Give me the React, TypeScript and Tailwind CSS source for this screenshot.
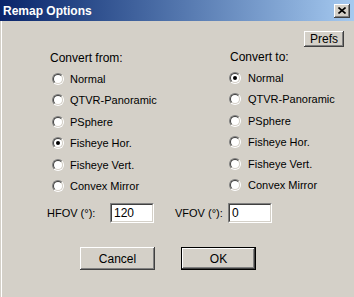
const FROM = ["Normal", "QTVR-Panoramic", "PSphere", "Fisheye Hor.", "Fisheye Vert.", "Convex Mirror"];
const TO = FROM;

function Radio({ checked }: { checked: boolean }) {
  return (
    <span className="flex h-[12px] w-[12px] shrink-0 rounded-full border border-t-[#808080] border-l-[#808080] border-r-white border-b-white">
      <span className="flex flex-1 items-center justify-center rounded-full border border-t-[#404040] border-l-[#404040] border-r-[#d4d0c8] border-b-[#d4d0c8] bg-white">
        {checked && <span className="h-[4px] w-[4px] rounded-full bg-black" />}
      </span>
    </span>
  );
}

function RadioList({ items, selected, gap }: { items: string[]; selected: number; gap: string }) {
  return (
    <div className="flex flex-col">
      {items.map((label, i) => (
        <div key={label} className={`flex h-[21.5px] items-center ${gap}`}>
          <Radio checked={i === selected} />
          <span>{label}</span>
        </div>
      ))}
    </div>
  );
}

function Field({ value }: { value: string }) {
  return (
    <div className="h-[20px] w-[44px] border border-t-[#808080] border-l-[#808080] border-r-white border-b-white">
      <div className="flex h-full items-center border border-t-[#404040] border-l-[#404040] border-r-[#d4d0c8] border-b-[#d4d0c8] bg-white pl-[2px] text-[12px]">
        {value}
      </div>
    </div>
  );
}

const raised =
  "bg-[#d4d0c8] shadow-[inset_-1px_-1px_#404040,inset_1px_1px_#fff,inset_-2px_-2px_#808080,inset_2px_2px_#d4d0c8]";

export default function App() {
  return (
    <div
      className="flex h-[297px] w-[354px] flex-col overflow-hidden bg-[#d4d0c8] text-[11px] text-black"
      style={{ fontFamily: '"Liberation Sans", Arial, sans-serif' }}
    >
      <div className="flex h-[21px] shrink-0 items-center justify-between bg-gradient-to-r from-[#0a246a] to-[#a6caf0] pl-[3px] pr-[4px]">
        <span className="text-[12px] font-bold text-white">Remap Options</span>
        <div className={`flex h-[14px] w-[16px] items-center justify-center ${raised}`}>
          <svg width="8" height="7" viewBox="0 0 8 7">
            <path d="M0.5 0.5 L7.5 6.5 M7.5 0.5 L0.5 6.5" stroke="#000" strokeWidth="1.6" />
          </svg>
        </div>
      </div>

      <div className="ml-px flex flex-1 flex-col shadow-[inset_1px_0_#fff]">
        <div className="mt-[10px] flex justify-end pr-[10px]">
          <button className={`h-[16px] w-[40px] text-[12px] leading-none ${raised}`}>Prefs</button>
        </div>

        <div className="mt-[5px] grid grid-cols-[177px_1fr] pl-[51px]">
          <div className="flex flex-col">
            <span className="-ml-[2px] h-[13px] text-[12px] leading-[13px]">Convert from:</span>
            <div className="mt-[3px]">
              <RadioList items={FROM} selected={3} gap="gap-[6px]" />
            </div>
          </div>
          <div className="-mt-px flex flex-col">
            <span className="ml-px h-[13px] text-[12px] leading-[13px]">Convert to:</span>
            <div className="mt-[3px]">
              <RadioList items={TO} selected={0} gap="gap-[7px]" />
            </div>
          </div>
        </div>

        <div className="mt-[6px] flex items-center pl-[46px]">
          <span className="w-[63px]">HFOV (°):</span>
          <Field value="120" />
          <span className="ml-[21px] w-[53px]">VFOV (°):</span>
          <Field value="0" />
        </div>

        <div className="mt-[24px] flex gap-[26px] pl-[79px] text-[12px]">
          <button className={`h-[23px] w-[75px] ${raised}`}>Cancel</button>
          <button className={`h-[23px] w-[75px] border border-black ${raised}`}>OK</button>
        </div>
      </div>
    </div>
  );
}
